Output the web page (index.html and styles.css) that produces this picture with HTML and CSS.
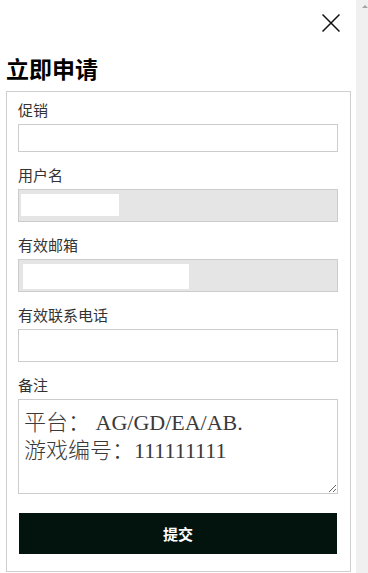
FILE: index.html
```html
<!DOCTYPE html>
<html lang="zh-CN">
<head>
<meta charset="utf-8">
<title>立即申请</title>
<link rel="stylesheet" href="styles.css">
</head>
<body>
<div class="page">
  <main class="panel">
    <div class="topbar">
      <button class="close" type="button" aria-label="关闭">
        <svg width="18" height="18" viewBox="0 0 18 18"><path d="M0.5 0.5L17.5 17.5M17.5 0.5L0.5 17.5" stroke="#111" stroke-width="1.5" fill="none"/></svg>
      </button>
    </div>
    <h1 class="title">立即申请</h1>
    <form class="card">
      <div class="field">
        <label class="label">促销</label>
        <input class="input input-short" type="text">
      </div>
      <div class="field">
        <label class="label">用户名</label>
        <div class="input locked"><span class="mask mask-user"></span></div>
      </div>
      <div class="field">
        <label class="label">有效邮箱</label>
        <div class="input locked"><span class="mask mask-mail"></span></div>
      </div>
      <div class="field">
        <label class="label">有效联系电话</label>
        <input class="input" type="tel">
      </div>
      <div class="field field-last">
        <label class="label">备注</label>
        <textarea class="notes">平台： AG/GD/EA/AB.
游戏编号：111111111</textarea>
      </div>
      <button class="submit" type="submit">提交</button>
    </form>
  </main>
  <div class="scrollbar"><span class="arrow"></span></div>
</div>
</body>
</html>
```
FILE: styles.css
```css
html, body {
  margin: 0;
  padding: 0;
  background: #fff;
}
body {
  font-family: "Noto Sans CJK SC", "Noto Sans", sans-serif;
  color: #333;
}
.page {
  display: flex;
  height: 573px;
  overflow: hidden;
}
.panel {
  flex: 1;
  display: flex;
  flex-direction: column;
}
.topbar {
  height: 45px;
  display: flex;
  align-items: center;
  justify-content: flex-end;
  padding-right: 16px;
}
.close {
  width: 18px;
  height: 18px;
  padding: 0;
  border: 0;
  background: none;
  display: flex;
  cursor: pointer;
}
.title {
  margin: 7px 0 7px 6px;
  font-size: 23px;
  line-height: 32px;
  font-weight: 700;
  color: #000;
}
.card {
  margin: 0 5px 0 6px;
  border: 1px solid #cfcfcf;
  padding: 8px 12px 17px 11px;
  display: flex;
  flex-direction: column;
}
.field {
  display: flex;
  flex-direction: column;
  margin-bottom: 13px;
}
.field-last {
  margin-bottom: 0;
}
.label {
  font-size: 15px;
  line-height: 20px;
  margin-bottom: 4px;
  color: #333;
}
.input {
  box-sizing: border-box;
  height: 33px;
  width: 100%;
  margin: 0;
  border: 1px solid #cccccc;
  background: #fff;
  padding: 0 6px;
  font: inherit;
  outline: none;
}
.input-short {
  height: 28px;
}
.locked {
  background: #e5e5e5;
  display: flex;
  padding: 4px 0 0 2px;
}
.mask {
  display: block;
  background: #fff;
}
.mask-user {
  width: 98px;
  height: 22px;
}
.mask-mail {
  width: 166px;
  height: 25px;
  margin-left: 2px;
}
.notes {
  box-sizing: border-box;
  width: 100%;
  height: 95px;
  margin: 0;
  border: 1px solid #cccccc;
  padding: 9px 5px;
  font-family: "Liberation Serif", "Noto Sans CJK SC", serif;
  font-size: 22px;
  font-weight: 300;
  line-height: 28px;
  color: #3a3a3a;
  outline: none;
  display: block;
}
.submit {
  margin: 19px 1px 0;
  height: 41px;
  border: 0;
  background: #03140f;
  color: #fff;
  font-family: "Noto Sans CJK SC", sans-serif;
  font-size: 15px;
  font-weight: 700;
  cursor: pointer;
}
.scrollbar {
  width: 12px;
  background: #f0f0f0;
  display: flex;
  flex-direction: column;
}
.arrow {
  width: 0;
  height: 0;
  margin: 5px 0 0 6px;
  border-left: 3px solid transparent;
  border-right: 3px solid transparent;
  border-bottom: 3px solid #a3a3a3;
}
```
